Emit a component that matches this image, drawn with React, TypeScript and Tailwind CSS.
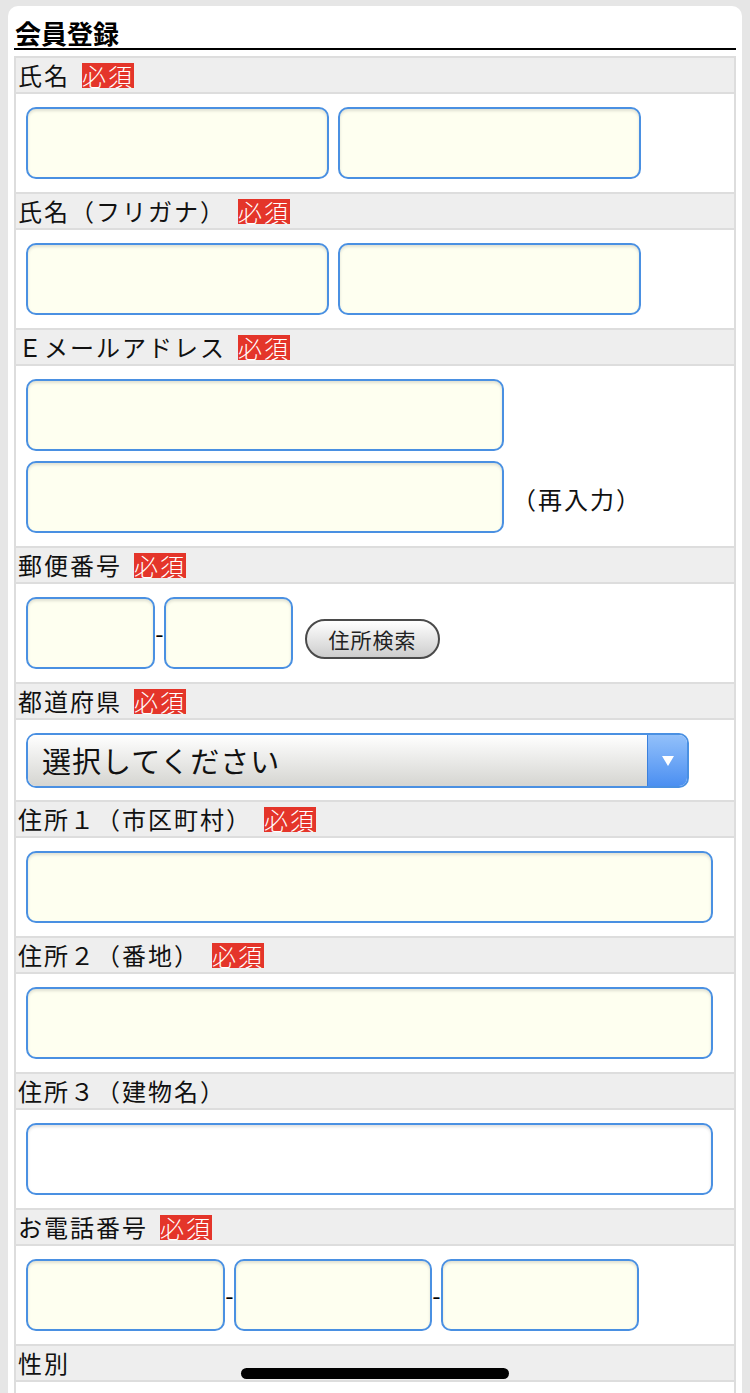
import React from "react";

const inputCls =
  "h-[72px] rounded-[10px] border-2 border-[#4a90e2] bg-[#fefff0] shadow-[inset_0_2px_3px_rgba(0,0,0,0.12)] outline-none px-2 text-[24px]";

const Badge = () => (
  <span className="ml-[12px] inline-block bg-[#e4352a] text-white text-[24px] font-light leading-[25px] tracking-[2px] h-[25px]">
    必須
  </span>
);

const Header = ({ label, required = false }: { label: string; required?: boolean }) => (
  <div className="h-[36px] bg-[#eeeeee] border-b-2 border-[#dddddd] flex items-center pl-[2px]">
    <span className="text-[24px] leading-none tracking-[2px] text-[#111]">{label}</span>
    {required && <Badge />}
  </div>
);

const Dash = () => <span className="w-[9px] text-center text-[24px] leading-none text-black">-</span>;

const Section = ({
  label,
  required,
  children,
  className = "py-[13px]",
}: {
  label: string;
  required?: boolean;
  children?: React.ReactNode;
  className?: string;
}) => (
  <div>
    <Header label={label} required={required} />
    <div className={"border-b-2 border-[#dddddd] bg-white px-[10px] " + className}>{children}</div>
  </div>
);

export default function App() {
  return (
    <div className="relative min-h-screen bg-[#e6e6e6] pt-[6px] px-[8px] font-['Noto_Sans_CJK_JP','Noto_Sans',sans-serif] text-[#111]">
      <div className="bg-white rounded-t-[10px] px-[6px] pb-[40px]">
        <div className="h-[44px] flex items-end border-b-2 border-black pl-[1px]">
          <h1 className="text-[26px] font-bold leading-[30px] text-black">会員登録</h1>
        </div>

        <div className="mt-[6px] border-x-2 border-t-2 border-[#dddddd]">
          <Section label="氏名" required>
            <div className="flex gap-[9px]">
              <input className={inputCls + " w-[303px]"} />
              <input className={inputCls + " w-[303px]"} />
            </div>
          </Section>

          <Section label="氏名（フリガナ）" required>
            <div className="flex gap-[9px]">
              <input className={inputCls + " w-[303px]"} />
              <input className={inputCls + " w-[303px]"} />
            </div>
          </Section>

          <Section label="Ｅメールアドレス" required>
            <div className="flex flex-col gap-[10px]">
              <input className={inputCls + " w-[478px]"} />
              <div className="flex items-center">
                <input className={inputCls + " w-[478px]"} />
                <span className="ml-[8px] mt-[4px] text-[24px] tracking-[2px] leading-none">（再入力）</span>
              </div>
            </div>
          </Section>

          <Section label="郵便番号" required>
            <div className="flex items-center">
              <input className={inputCls + " w-[129px]"} />
              <Dash />
              <input className={inputCls + " w-[129px]"} />
              <button className="ml-[12px] mt-[12px] h-[40px] w-[135px] rounded-full border-2 border-[#4a4a4a] bg-linear-to-b from-white to-[#cdcdcd] text-[21px] leading-none tracking-[1px] text-[#222]">
                住所検索
              </button>
            </div>
          </Section>

          <Section label="都道府県" required className="pt-[13px] pb-[12px]">
            <div className="flex w-[663px] h-[55px] rounded-[10px] border-2 border-[#4a90e2] overflow-hidden">
              <div className="flex-1 flex items-center pl-[14px] bg-linear-to-b from-white to-[#d5d5d1] text-[29px] tracking-[1px] text-[#111]">
                選択してください
              </div>
              <div className="w-[40px] flex items-center justify-center border-l border-[#3b80dc] bg-linear-to-b from-[#92c0fa] to-[#4b8ff1]">
                <svg width="14" height="12" viewBox="0 0 14 12">
                  <path d="M1 1h12L7 11z" fill="#fff" />
                </svg>
              </div>
            </div>
          </Section>

          <Section label="住所１（市区町村）" required>
            <input className={inputCls + " w-[687px]"} />
          </Section>

          <Section label="住所２（番地）" required>
            <input className={inputCls + " w-[687px]"} />
          </Section>

          <Section label="住所３（建物名）">
            <input className={inputCls + " w-[687px] bg-white"} />
          </Section>

          <Section label="お電話番号" required>
            <div className="flex items-center">
              <input className={inputCls + " w-[199px]"} />
              <Dash />
              <input className={inputCls + " w-[198px]"} />
              <Dash />
              <input className={inputCls + " w-[198px]"} />
            </div>
          </Section>

          <Section label="性別">
            <div className="h-[72px]" />
          </Section>
        </div>
      </div>

      <div className="absolute top-[1368px] left-[241px] w-[268px] h-[11px] rounded-full bg-black" />
    </div>
  );
}
